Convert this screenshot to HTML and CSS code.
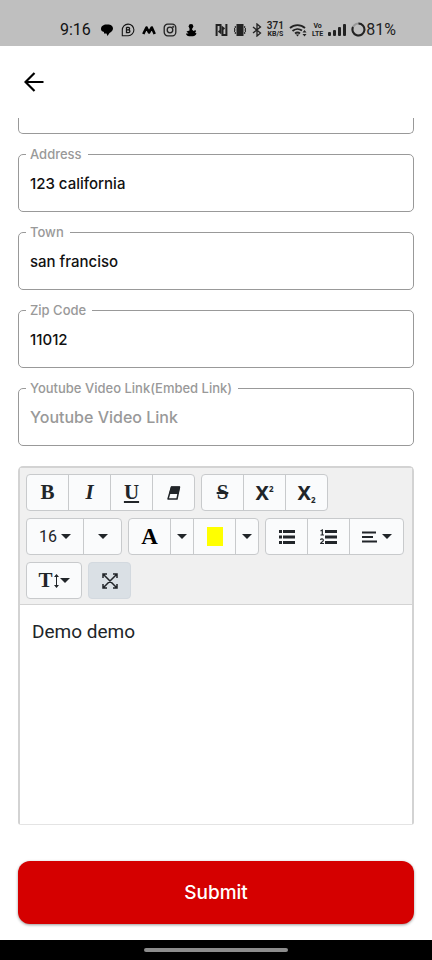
FILE: index.html
```html
<!DOCTYPE html>
<html lang="en">
<head>
<meta charset="utf-8">
<meta name="viewport" content="width=device-width, initial-scale=1">
<title>Edit details</title>
<link rel="stylesheet" href="styles.css">
</head>
<body>
<header class="status">
  <div class="status-left">
    <span class="clock">9:16</span>
    <svg width="14" height="14" viewBox="0 0 14 14"><path d="M1 6C1 3 3.500 1.500 6.500 1.500C10 1 13 2.500 13 5.500C13 8 11 9 9.500 10L7.500 13L6.500 10.500L4 10.500V9C2 8.500 1 7.500 1 6Z"/></svg>
    <svg width="14" height="14" viewBox="0 0 14 14" fill="none" stroke="#151515"><path d="M1.300 12.700V7A5.800 5.800 0 1 1 7.200 12.700Z" stroke-width="1.100"/><path d="M5.500 4.300V9.700H7.500A1.400 1.400 0 0 0 7.500 6.900H5.500M5.500 4.300H7.300A1.300 1.300 0 0 1 7.300 6.900" stroke-width="1.300"/></svg>
    <svg width="14" height="14" viewBox="0 0 14 14" fill="none" stroke="#000" stroke-width="2.600" stroke-linejoin="round"><path d="M1.300 11L4.500 4.500L7 9.500L9.800 4.500L12.700 11"/></svg>
    <svg width="14" height="14" viewBox="0 0 14 14" fill="none" stroke="#222" stroke-width="1.300"><rect x="1.200" y="1.200" width="11.600" height="11.600" rx="3.500"/><circle cx="7" cy="7" r="2.800"/><circle cx="10.300" cy="3.700" r=".4"/></svg>
    <svg width="14" height="14" viewBox="0 0 14 14"><circle cx="7" cy="3.200" r="2.300"/><path d="M5.500 4.500H8.500L8 6.500L9.500 8L11.500 7L12 8.500L11 9.500L12.500 10.500C12 12.500 10 13.300 7 13.300C4 13.300 2 12.500 2 10.500L4.500 10.500L2.500 8.500L5.500 7.500Z"/></svg>
  </div>
  <div class="status-right">
    <svg width="13" height="14" viewBox="0 0 13 14" fill="none" stroke="#222" stroke-width="2"><path d="M1.600 13V2H5.500V9.500L3.500 8"/><path d="M11.400 1V12H7.500V4.500L9.500 6"/></svg>
    <svg width="14" height="14" viewBox="0 0 14 14" fill="none" stroke="#222"><rect x="4" y="1.500" width="6" height="11" fill="#222"/><path d="M2.300 3V5L1 6L2.300 7L1 8L2.300 9V11M11.700 3V5L13 6L11.700 7L13 8L11.700 9V11"/></svg>
    <svg width="10" height="14" viewBox="0 0 10 14" fill="none" stroke="#222" stroke-width="1.300"><path d="M1 4L8.500 10L5 13V1L8.500 4L1 10"/></svg>
    <span class="rate"><b>371</b><small>KB/S</small></span>
    <svg width="18" height="14" viewBox="0 0 18 14" fill="none" stroke="#222" stroke-width="1.800"><path d="M1 5A11 11 0 0 1 16 5M3.500 8A7.500 7.500 0 0 1 13 7.500M6 10.500A4 4 0 0 1 11 10.500"/><path d="M8.500 13.500L6.800 11.500H10.200ZM15.500 7L17.500 9.500H13.500ZM15.500 13.500L13.500 11H17.500Z" fill="#222" stroke="none"/></svg>
    <span class="volte"><b>Vo</b><b>LTE</b></span>
    <svg width="18" height="14" viewBox="0 0 18 14" fill="#222"><rect y="9" width="3" height="4" rx="1"/><rect x="5" y="7" width="3" height="6" rx="1"/><rect x="10" y="4" width="3" height="9" rx="1"/><rect x="15" y="1" width="3" height="12" rx="1"/></svg>
    <span class="battery"><svg width="15" height="15" viewBox="0 0 15 15" fill="none" stroke-width="2"><circle cx="7.500" cy="7.500" r="6" stroke="#999"/><path d="M7.500 1.500A6 6 0 1 1 2 5" stroke="#222"/></svg>81%</span>
  </div>
</header>

<nav class="appbar">
  <button class="back" type="button" aria-label="Back"><svg width="20" height="20" viewBox="0 0 20 20" fill="none" stroke="#000" stroke-width="2.200"><path d="M19.500 10H2M10.500 1L1.500 10L10.500 19"/></svg></button>
</nav>

<form class="form">
  <div class="field-tail"></div>
  <fieldset class="field"><legend><label for="address">Address</label></legend><input id="address" type="text" value="123 california"></fieldset>
  <fieldset class="field"><legend><label for="town">Town</label></legend><input id="town" type="text" value="san franciso"></fieldset>
  <fieldset class="field"><legend><label for="zip">Zip Code</label></legend><input id="zip" type="text" value="11012"></fieldset>
  <fieldset class="field"><legend><label for="video">Youtube Video Link(Embed Link)</label></legend><input id="video" class="large" type="text" placeholder="Youtube Video Link"></fieldset>

  <section class="editor">
    <div class="toolbar">
      <div class="group">
        <button type="button" class="glyph">B</button>
        <button type="button" class="glyph italic">I</button>
        <button type="button" class="glyph underline">U</button>
        <button type="button" aria-label="Clear formatting"><svg width="16" height="16" viewBox="0 0 16 16"><path d="M5.500 2H13.500L11 14H2Z" fill="#fafbfc" stroke="#212529" stroke-width="1.500" stroke-linejoin="round"/><path d="M5 1.500H14L12.500 9H3Z" fill="#212529"/></svg></button>
      </div>
      <div class="group">
        <button type="button" class="glyph strike">S</button>
        <button type="button" class="script">X<sup>2</sup></button>
        <button type="button" class="script">X<sub>2</sub></button>
      </div>
      <div class="group">
        <button type="button" class="size">16<i class="caret"></i></button>
        <button type="button" class="medium" aria-label="Font size unit"><i class="caret"></i></button>
      </div>
      <div class="group">
        <button type="button" class="glyph color">A</button>
        <button type="button" class="narrow" aria-label="Text color"><i class="caret"></i></button>
        <button type="button" aria-label="Highlight"><i class="swatch"></i></button>
        <button type="button" class="narrow" aria-label="Highlight color"><i class="caret"></i></button>
      </div>
      <div class="group">
        <button type="button" aria-label="Bulleted list"><svg width="16" height="14" viewBox="0 0 16 14" fill="#212529"><path d="M0 0H3V3H0ZM4 0H16V3H4ZM0 5.500H3V8.500H0ZM4 5.500H16V8.500H4ZM0 11H3V14H0ZM4 11H16V14H4Z"/></svg></button>
        <button type="button" aria-label="Numbered list"><svg width="17" height="16" viewBox="0 0 17 16" fill="none" stroke="#212529"><path d="M5 2.500H17M5 8H17M5 13.500H17" stroke-width="2.800"/><path d="M.5 2L2.300 1V6M.5 6H4M.5 11C1 9.500 3.500 9.500 3.300 11.500C3.200 12.500 1 13.500 .7 14.500H4" stroke-width="1.200"/></svg></button>
        <button type="button" class="wide" aria-label="Paragraph alignment"><svg width="16" height="12" viewBox="0 0 16 12" stroke="#212529" stroke-width="2.200"><path d="M0 1.500H14M0 6H11M0 10.500H15"/></svg><i class="caret"></i></button>
      </div>
      <div class="group">
        <button type="button" class="glyph wide height">T<svg width="5" height="14" viewBox="0 0 5 14" fill="#212529"><path d="M2.500 0L5 3H3V11H5L2.500 14L0 11H2V3H0Z"/></svg><i class="caret"></i></button>
      </div>
      <div class="group active">
        <button type="button" aria-label="Full screen"><svg width="16" height="16" viewBox="0 0 16 16" fill="none" stroke="#212529" stroke-width="1.500"><path d="M1.500 1.500L14.500 14.500M14.500 1.500L1.500 14.500M1 5V1H5M11 1H15V5M15 11V15H11M5 15H1V11"/></svg></button>
      </div>
    </div>
    <textarea class="editable" aria-label="Description">Demo demo</textarea>
  </section>

  <button class="submit" type="button">Submit</button>
</form>
<footer class="gesture"><span class="pill"></span></footer>
</body>
</html>
```

FILE: styles.css
```css
* { box-sizing: border-box; }
body {
  margin: 0;
  min-height: 100vh;
  display: flex;
  flex-direction: column;
  background: #fff;
  font-family: Inter, "Liberation Sans", sans-serif;
}
button { font: inherit; color: inherit; cursor: pointer; }
svg { display: block; flex: none; }

.status {
  height: 46px;
  padding: 0 36px 1px 60px;
  display: flex;
  justify-content: space-between;
  align-items: flex-end;
  background: #bfbfbf;
  color: #222;
}
.status-left, .status-right { display: flex; align-items: center; height: 31px; }
.status-left { gap: 7px; }
.status-right { gap: 5px; }
.clock { width: 33px; font: 16px Roboto, sans-serif; color: #111; }
.rate, .volte { display: flex; flex-direction: column; align-items: center; font-family: Roboto, sans-serif; }
.rate b { font-size: 10px; line-height: 9px; font-weight: 600; }
.rate small { font-size: 7px; line-height: 8px; font-weight: 700; }
.volte b { font-size: 7px; line-height: 8px; }
.battery { display: flex; align-items: center; font-size: 16px; font-family: Roboto, sans-serif; }

.appbar { height: 72px; padding: 0 19px; display: flex; align-items: center; }
.back { width: 30px; height: 40px; padding: 0; border: 0; background: none; display: flex; align-items: center; justify-content: center; }

.form { flex: 1; display: flex; flex-direction: column; padding: 0 18px 16px; }
.field-tail { height: 16px; border: 1px solid #999; border-top: 0; border-radius: 0 0 5px 5px; }
.field {
  margin: 10px 0 0;
  padding: 0 7px;
  min-width: 0;
  border: 1px solid #999;
  border-radius: 5px;
}
.field legend { padding: 0 6px 0 4px; font-size: 13px; line-height: 20px; font-weight: 500; color: #999; }
.field label { display: block; }
.field input {
  display: block;
  width: 100%;
  height: 47px;
  padding: 0 4px 9px;
  border: 0;
  outline: 0;
  background: none;
  font: 500 15px Inter, "Liberation Sans", sans-serif;
  color: #111;
}
.field input.large { font-size: 16px; }
.field input::placeholder { color: #999; opacity: 1; }

.editor {
  flex: 1;
  min-height: 240px;
  margin-top: 20px;
  display: flex;
  flex-direction: column;
  border: 2px solid #d3d3d3;
  border-bottom: 1px solid #e4e4e4;
  border-radius: 5px 5px 3px 3px;
}
.toolbar {
  display: flex;
  flex-wrap: wrap;
  gap: 7px 6px;
  padding: 6px 6px 5px;
  background: #f0f0f0;
  border-bottom: 1px solid #d3d3d3;
  color: #212529;
}
.group { display: flex; height: 37px; border: 1px solid #c8cacc; border-radius: 4px; background: #fafbfc; overflow: hidden; }
.group button {
  width: 42px;
  padding: 0;
  border: 0;
  background: none;
  display: flex;
  align-items: center;
  justify-content: center;
}
.group button:first-child { width: 41px; }
.group button + button { border-left: 1px solid #c8cacc; }
.group .glyph { font: bold 21px "Liberation Serif", serif; }
.group .italic { font-style: italic; }
.group .underline { text-decoration: underline; }
.group .strike { text-decoration: line-through; }
.group .color { color: #000; font-size: 23px; }
.group .script { font: bold 20px "Noto Sans", sans-serif; }
.script sup, .script sub { font-size: 8px; line-height: 8px; }
.script sup { align-self: flex-start; margin-top: 10px; }
.script sub { align-self: flex-end; margin-bottom: 6px; }
.group .size:first-child { width: 56px; gap: 4px; font: 16px Roboto, sans-serif; }
.group .medium { width: 38px; }
.group .narrow { width: 23px; }
.group .wide, .group .wide:first-child { width: 54px; gap: 4px; }
.group .height:first-child { gap: 1px; }
.group.active { background: #dae0e5; border-color: #d3d9df; }
.caret { border: 5px solid transparent; border-top-color: #212529; border-bottom: 0; }
.swatch { width: 16px; height: 19px; background: #ff0; }
.editable {
  flex: 1;
  width: 100%;
  padding: 15px 12px;
  border: 0;
  outline: 0;
  resize: none;
  background: #fff;
  color: #212529;
  font: 19px/24px Roboto, sans-serif;
}
.submit {
  height: 63px;
  margin-top: 36px;
  border: 0;
  border-radius: 12px;
  background: #d50000;
  color: #fff;
  font-size: 19px;
  font-weight: 500;
  box-shadow: 0 1px 3px rgba(0, 0, 0, .4);
}
.gesture { height: 20px; background: #000; display: flex; justify-content: center; align-items: center; }
.pill { width: 33.333%; height: 4px; border-radius: 2px; background: #8c8c8c; }
```
